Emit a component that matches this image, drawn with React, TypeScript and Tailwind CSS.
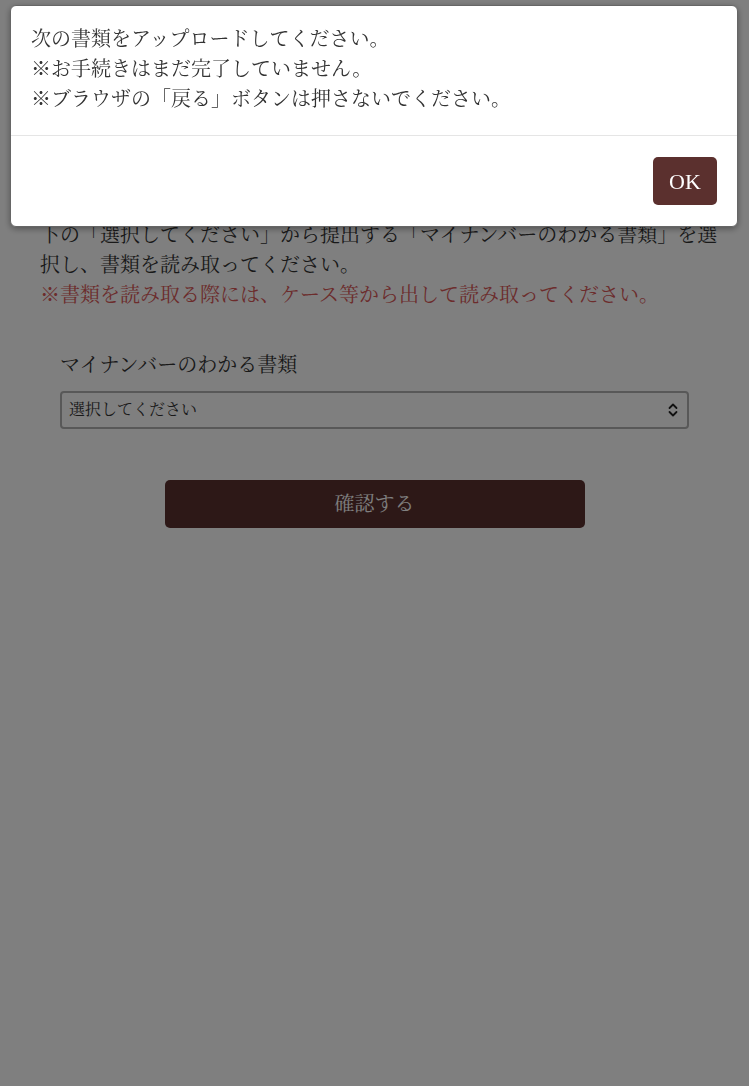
const font = "font-['Liberation_Serif','Noto_Serif_CJK_JP','Noto_Sans_CJK_JP',serif]";

const ChevronUpDown = () => (
    <svg width="12" height="16" viewBox="0 0 12 16" fill="none" stroke="#222" strokeWidth={1.8} strokeLinecap="round" strokeLinejoin="round">
        <path d="M2.5 6 L6 2.5 L9.5 6" />
        <path d="M2.5 10 L6 13.5 L9.5 10" />
    </svg>
);

const App = () => {
    return (
        <div className={ `relative min-h-[1086px] bg-white text-[#333] ${font}` }>
            {/* page behind the dialog */}
            <div className="pt-[220px]">
                <div className="pl-[40px] pr-[28px] text-[20px] leading-[30px]">
                    <p>下の「選択してください」から提出する「マイナンバーのわかる書類」を選択し、書類を読み取ってください。</p>
                    <p className="text-[#d85858]">※書類を読み取る際には、ケース等から出して読み取ってください。</p>
                </div>

                <div className="px-[60px] mt-[40px]">
                    <label className="block text-[20px] leading-[30px]">マイナンバーのわかる書類</label>
                    <div className="mt-[11px] h-[38px] flex items-center justify-between border-2 border-[#b0b0b0] rounded-[4px] bg-white pl-[7px] pr-[8px]">
                        <span className="text-[16px] text-[#333]">選択してください</span>
                        <ChevronUpDown />
                    </div>
                </div>

                <div className="flex justify-center mt-[51px]">
                    <button className="w-[420px] h-[48px] rounded-[5px] bg-[#5b302e] text-white text-[20px]">確認する</button>
                </div>
            </div>

            {/* overlay */}
            <div className="fixed inset-0 bg-black/50" />

            {/* dialog */}
            <div className="fixed top-[5px] left-[10px] right-[11px] bg-white rounded-[6px] border border-[#666] shadow-[0_2px_6px_rgba(0,0,0,0.35)]">
                <div className="px-[20px] pt-[18px] pb-[21px] text-[20px] leading-[30px] text-[#333]">
                    <p>次の書類をアップロードしてください。</p>
                    <p>※お手続きはまだ完了していません。</p>
                    <p>※ブラウザの「戻る」ボタンは押さないでください。</p>
                </div>
                <div className="border-t border-[#e5e5e5] flex justify-end px-[20px] py-[21px]">
                    <button className="w-[64px] h-[48px] rounded-[5px] bg-[#5b302e] text-white text-[22px]">OK</button>
                </div>
            </div>
        </div>
    );
};

export default App;
